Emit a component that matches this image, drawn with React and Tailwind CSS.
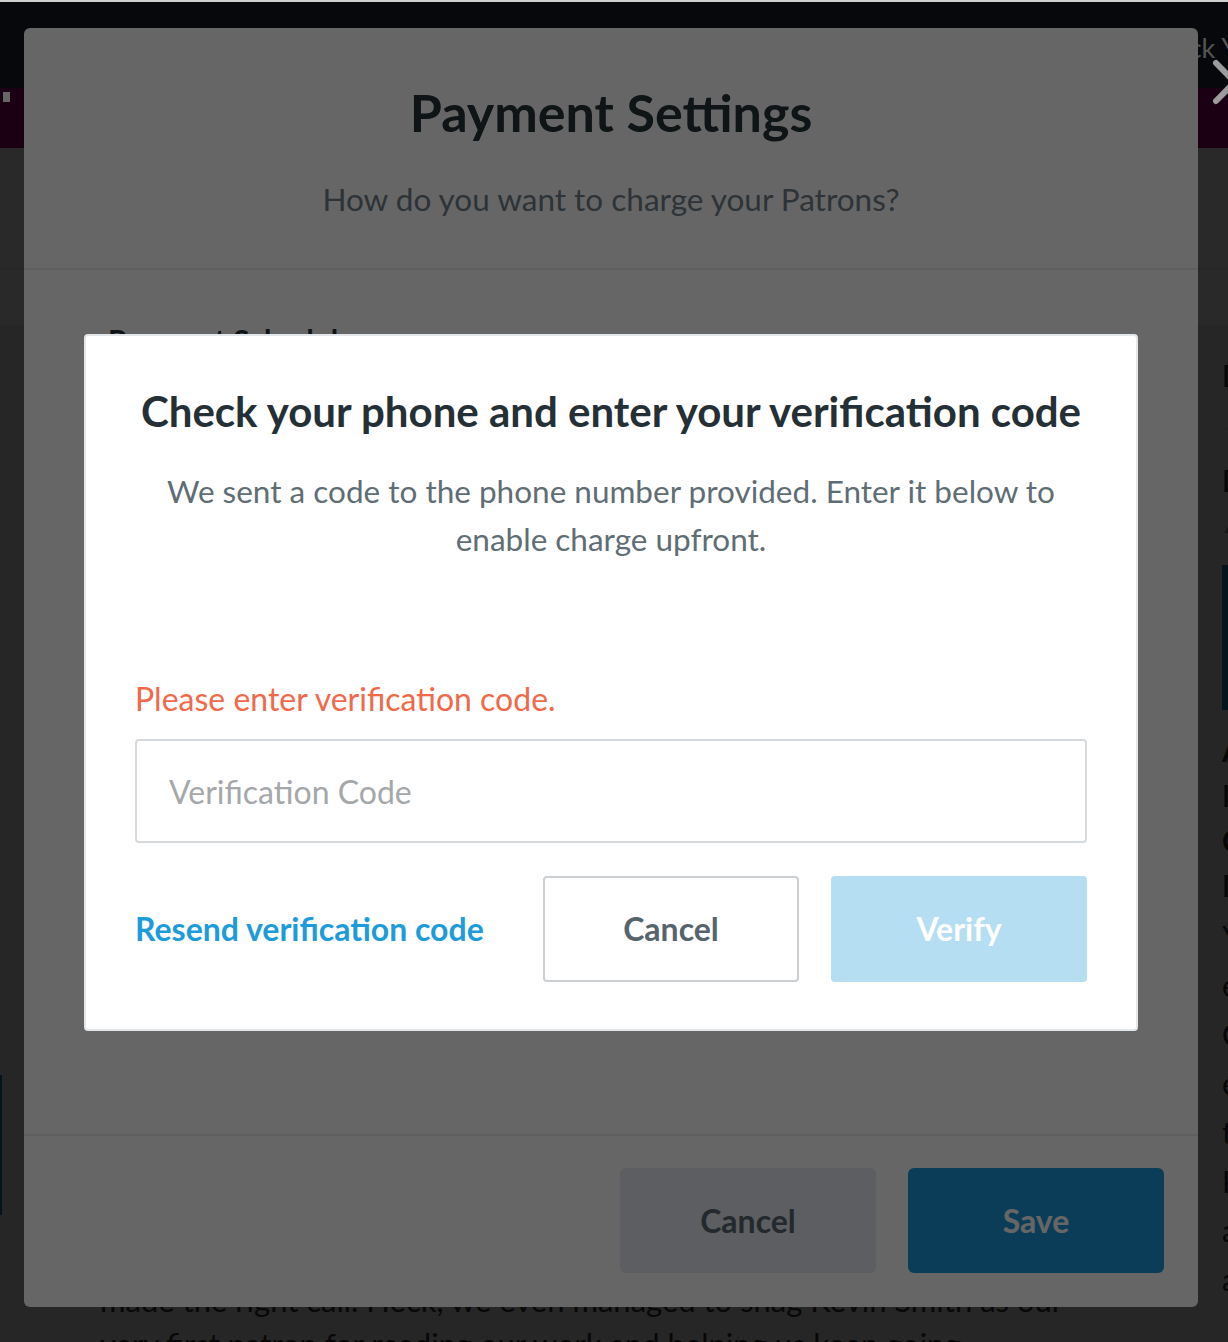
import React from 'react'

// page that sits underneath both backdrops
const Page = () => (
  <div className="flex flex-col">
    {/* header is stacked above the first backdrop */}
    <header className="relative z-20">
      <div className="h-[88px] bg-[#0f141c] flex items-center pt-[8px] pl-[1158px] text-[27px] text-[#d2d2d2] whitespace-nowrap">
        Back Your Creators
      </div>
      <div className="h-[60px] bg-[#440030] flex items-start">
        <span className="mt-[4px] ml-[3px] w-[7px] h-[10px] bg-white" />
      </div>
    </header>

    <div className="h-[122px] bg-white border-b-2 border-[#f4f4f4]" />
    <div className="h-[55px] bg-white" />

    <main className="flex bg-[#eeeeee] h-[1017px]">
      <div className="w-[28px] shrink-0">
        <div className="mt-[750px] h-[140px] w-[2px] bg-[#197daf]" />
      </div>
      <article className="w-[1194px] shrink-0 pt-[953px] pl-[72px] text-[31px] leading-[44px] text-[#333] whitespace-nowrap">
        <p>made the right call. Heck, we even managed to snag Kevin Smith as our</p>
        <p>very first patron for reading our work and helping us keep going.</p>
      </article>
      <aside className="w-[400px] shrink-0 pt-[30px] text-[30px] text-[#333] whitespace-nowrap">
        <p className="font-bold leading-[40px]">Featured</p>
        <div className="border-b-2 border-[#e0e0e0] mt-[33px]" />
        <p className="font-bold leading-[40px] mt-[30px]">Earnings</p>
        <p className="text-[22px] text-[#999] leading-[30px] mt-[10px]">∠ Last month</p>
        <div className="mt-[25px] h-[145px] w-[260px] bg-[#197daf]" />
        <div className="mt-[18px] font-bold leading-[45px]">
          <p>About</p>
          <p>Earn</p>
          <p>Create</p>
          <p>Explore</p>
        </div>
        <div className="mt-[4px] leading-[49px]">
          <p>Your page</p>
          <p>earnings</p>
          <p>Creators</p>
          <p>explore</p>
          <p>tiers</p>
          <p>Posts</p>
          <p>about</p>
          <p>apps</p>
        </div>
      </aside>
    </main>
  </div>
)

const PaymentSettings = () => (
  <section className="absolute z-30 left-[24px] top-[28px] w-[1174px] h-[1279px] bg-white rounded-md flex flex-col overflow-hidden">
    {/* Heading */}
    <header className="pt-[55px] pb-[51px] border-b-2 border-[#eeeeee] text-center">
      <h1 className="text-[52px] leading-[58px] font-bold text-[#263238]">Payment Settings</h1>
      <p className="mt-[40px] text-[31.5px] leading-[36px] text-[#72818a]">How do you want to charge your Patrons?</p>
    </header>

    {/* Body */}
    <div className="flex-1 px-[84px] pt-[50px]">
      <h2 className="text-[30px] leading-[40px] font-bold text-[#263238]">Payment Schedule</h2>
    </div>

    {/* Actions */}
    <footer className="border-t-2 border-[#eeeeee] pt-[32px] pb-[34px] pr-[34px] flex justify-end gap-[32px]">
      <button className="w-[256px] h-[105px] rounded-md bg-[#e6ebf2] text-[32px] font-bold text-[#5a6872]">
        Cancel
      </button>
      <button className="w-[256px] h-[105px] rounded-md bg-[#1e99dc] text-[32px] font-bold text-white">
        Save
      </button>
    </footer>
  </section>
)

const CloseIcon = () => (
  <svg
    className="absolute z-50 left-[1210px] top-[58px]"
    width="48"
    height="48"
    viewBox="0 0 48 48"
    fill="none"
    stroke="#9c9c9c"
    strokeWidth="6"
    strokeLinecap="round"
  >
    <path d="M6 5 L43 43 M43 5 L6 43" />
  </svg>
)

const VerifyDialog = () => (
  <section className="absolute z-50 left-[84px] top-[334px] w-[1054px] h-[697px] bg-white border-2 border-[#e3e7e9] rounded-[4px] px-[49px] pt-[51px] flex flex-col">
    <h1 className="text-[42px] leading-[48px] font-bold text-center text-[#252f36] whitespace-nowrap">
      Check your phone and enter your verification code
    </h1>
    <p className="mt-[32px] text-[31.5px] leading-[48px] text-center text-[#5f6d75]">
      We sent a code to the phone number provided. Enter it below to enable charge upfront.
    </p>

    <p className="mt-[118px] text-[32px] leading-[36px] text-[#f0694a]">Please enter verification code.</p>
    <input
      type="text"
      placeholder="Verification Code"
      className="mt-[22px] h-[104px] w-full border-2 border-[#d6dadd] rounded-[4px] pl-[32px] text-[32px] text-[#252f36] placeholder:text-[#a5a8aa] outline-none"
    />

    <footer className="mt-[33px] flex items-center gap-[32px]">
      <a className="mr-auto text-[32px] font-bold text-[#1e9bd9] cursor-pointer">Resend verification code</a>
      <button className="w-[256px] h-[106px] border-2 border-[#ccd0d2] rounded-[4px] bg-white text-[32px] font-bold text-[#56646c]">
        Cancel
      </button>
      <button className="w-[256px] h-[106px] rounded-[4px] bg-[#b5def3] text-[32px] font-bold text-white">
        Verify
      </button>
    </footer>
  </section>
)

export default function App() {
  return (
    <div className="relative w-[1228px] h-[1342px] overflow-hidden bg-white font-[Lato,sans-serif]">
      <Page />
      <div className="absolute inset-0 z-10 bg-black/60" />
      <PaymentSettings />
      <div className="absolute inset-0 z-40 bg-black/60" />
      <CloseIcon />
      <VerifyDialog />
      <div className="absolute z-50 top-0 inset-x-0 h-[2px] bg-[#cfcfcf]" />
    </div>
  )
}
